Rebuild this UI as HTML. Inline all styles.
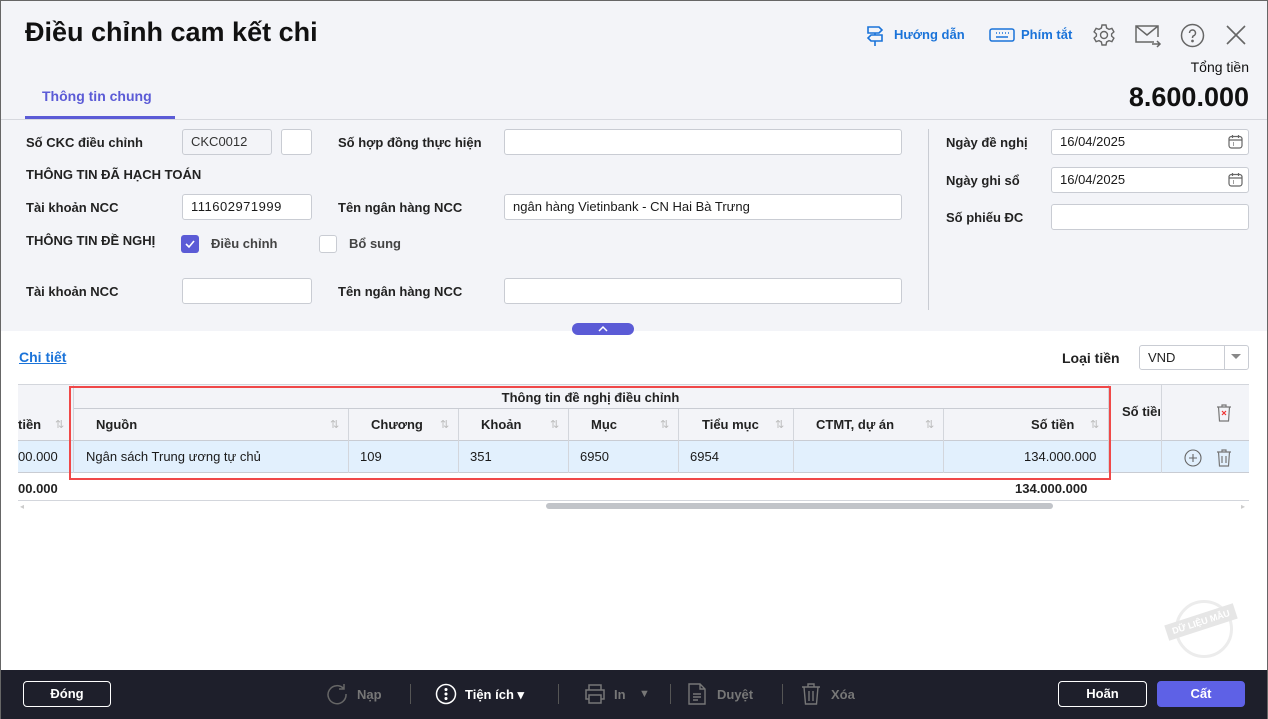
<!DOCTYPE html>
<html><head><meta charset="utf-8">
<style>
*{box-sizing:border-box;margin:0;padding:0}
body{width:1268px;height:719px;overflow:hidden;font-family:"Liberation Sans",sans-serif;font-size:13px;color:#1a1a1a;background:#fff;position:relative}
.a{position:absolute}
.top{left:0;top:0;width:1268px;height:331px;background:#f3f4f8;border-left:1px solid #666;border-right:1px solid #666;border-top:1px solid #666}
.lbl{font-weight:bold;font-size:13px;color:#222}
.inp{position:absolute;background:#fff;border:1px solid #c9ccd3;border-radius:3px;height:26px;padding:0 8px;line-height:24px;font-size:13px}
.sort{color:#bbb;font-size:11px;position:absolute;top:0}
.vl{position:absolute;width:1px;background:#d3d6dc}
.foot{left:0;top:670px;width:1268px;height:49px;background:#1e1f2b}
.fbtn{position:absolute;top:12px;height:26px;border:1px solid #fff;border-radius:4px;color:#fff;font-weight:bold;text-align:center;line-height:24px}
.ft{position:absolute;top:0;line-height:49px;font-weight:bold;font-size:13px}
</style></head><body>
<div class="a top"></div>
<div class="a" style="left:0;top:0;width:1268px;height:719px;border-left:1px solid #666;border-right:1px solid #666;pointer-events:none;z-index:5"></div>
<div class="a" style="left:25px;top:17px;font-size:27px;font-weight:bold;color:#111">Điều chỉnh cam kết chi</div>
<svg class="a" style="left:865px;top:25px" width="20" height="22" viewBox="0 0 20 22" fill="none" stroke="#1a73d9" stroke-width="1.6"><path d="M3 2h11l3 3-3 3H3zM17 10H6l-3 3 3 3h11zM10 8v2M10 16v5"/></svg>
<div class="a" style="left:894px;top:27px;color:#1a73d9;font-weight:bold;font-size:13px">Hướng dẫn</div>
<svg class="a" style="left:989px;top:28px" width="26" height="14" viewBox="0 0 26 14" fill="none" stroke="#1a73d9" stroke-width="1.5"><rect x="1" y="1" width="24" height="12" rx="2"/><path d="M7 5h1M10 5h1M13 5h1M16 5h1M19 5h1M7 9h12"/></svg>
<div class="a" style="left:1021px;top:27px;color:#1a73d9;font-weight:bold;font-size:13px">Phím tắt</div>
<svg class="a" style="left:1092px;top:23px" width="24" height="24" viewBox="0 0 24 24" fill="none" stroke="#666" stroke-width="1.4"><circle cx="12" cy="12" r="3.5"/><path d="M10 2h4l.6 3 2.4 1.4 2.9-1 2 3.5-2.3 2v2.2l2.3 2-2 3.5-2.9-1L14.6 19 14 22h-4l-.6-3L7 17.6l-2.9 1-2-3.5 2.3-2v-2.2l-2.3-2 2-3.5 2.9 1L9.4 5z"/></svg>
<svg class="a" style="left:1135px;top:24px" width="27" height="24" viewBox="0 0 27 24" fill="none" stroke="#666" stroke-width="1.5"><path d="M19 18H1V2h22v11M1 2l11 9 11-9M17 20h8M22 17l3 3-3 3"/></svg>
<svg class="a" style="left:1180px;top:23px" width="25" height="25" viewBox="0 0 25 25" fill="none" stroke="#666" stroke-width="1.5"><circle cx="12.5" cy="12.5" r="11"/><path d="M9.5 10a3 3 0 1 1 4 2.8c-1 .4-1 1.2-1 2.2"/><circle cx="12.5" cy="18" r=".6" fill="#666"/></svg>
<svg class="a" style="left:1226px;top:25px" width="20" height="20" viewBox="0 0 20 20" stroke="#666" stroke-width="1.6"><path d="M1 1l18 18M19 1L1 19"/></svg>
<div class="a" style="right:19px;top:59px;font-size:14px;color:#111">Tổng tiền</div>
<div class="a" style="right:19px;top:82px;font-size:27px;font-weight:bold;color:#111">8.600.000</div>
<div class="a" style="left:42px;top:88px;color:#5b5bd6;font-weight:bold;font-size:14px">Thông tin chung</div>
<div class="a" style="left:25px;top:116px;width:150px;height:3px;background:#5b5bd6"></div>
<div class="a" style="left:1px;top:119px;width:1266px;height:1px;background:#d6d8de"></div>
<div class="a lbl" style="left:26px;top:135px">Số CKC điều chỉnh</div>
<div class="inp" style="left:182px;top:129px;width:90px;background:#f3f4f8;color:#333">CKC0012</div>
<div class="inp" style="left:281px;top:129px;width:31px"></div>
<div class="a lbl" style="left:338px;top:135px">Số hợp đồng thực hiện</div>
<div class="inp" style="left:504px;top:129px;width:398px"></div>
<div class="a lbl" style="left:26px;top:167px">THÔNG TIN ĐÃ HẠCH TOÁN</div>
<div class="a lbl" style="left:26px;top:200px">Tài khoản NCC</div>
<div class="inp" style="left:182px;top:194px;width:130px;letter-spacing:.5px">111602971999</div>
<div class="a lbl" style="left:338px;top:200px">Tên ngân hàng NCC</div>
<div class="inp" style="left:504px;top:194px;width:398px">ngân hàng Vietinbank - CN Hai Bà Trưng</div>
<div class="a lbl" style="left:26px;top:233px">THÔNG TIN ĐỀ NGHỊ</div>
<div class="a" style="left:181px;top:235px;width:18px;height:18px;background:#5b5bd6;border-radius:3px"><svg width="18" height="18"><path d="M5 9l3 3 5-6" stroke="#fff" stroke-width="1.6" fill="none"/></svg></div>
<div class="a lbl" style="left:211px;top:236px;color:#444">Điều chỉnh</div>
<div class="a" style="left:319px;top:235px;width:18px;height:18px;background:#fff;border:1px solid #c9ccd3;border-radius:3px"></div>
<div class="a lbl" style="left:349px;top:236px;color:#444">Bổ sung</div>
<div class="a lbl" style="left:26px;top:284px">Tài khoản NCC</div>
<div class="inp" style="left:182px;top:278px;width:130px"></div>
<div class="a lbl" style="left:338px;top:284px">Tên ngân hàng NCC</div>
<div class="inp" style="left:504px;top:278px;width:398px"></div>
<div class="a" style="left:928px;top:129px;width:1px;height:181px;background:#c9ccd3"></div>
<div class="a lbl" style="left:946px;top:135px">Ngày đề nghị</div>
<div class="inp" style="left:1051px;top:129px;width:198px">16/04/2025</div>
<div class="a lbl" style="left:946px;top:173px">Ngày ghi sổ</div>
<div class="inp" style="left:1051px;top:167px;width:198px">16/04/2025</div>
<svg class="a" style="left:1228px;top:134px" width="15" height="15" viewBox="0 0 15 15" fill="none" stroke="#666" stroke-width="1.2"><rect x="1" y="2.5" width="13" height="11.5" rx="2.5"/><path d="M1 6h13M4.5 1v3M10.5 1v3M5 9h1M5 11h1"/></svg>
<svg class="a" style="left:1228px;top:172px" width="15" height="15" viewBox="0 0 15 15" fill="none" stroke="#666" stroke-width="1.2"><rect x="1" y="2.5" width="13" height="11.5" rx="2.5"/><path d="M1 6h13M4.5 1v3M10.5 1v3M5 9h1M5 11h1"/></svg>
<div class="a lbl" style="left:946px;top:210px">Số phiếu ĐC</div>
<div class="inp" style="left:1051px;top:204px;width:198px"></div>
<div class="a" style="left:572px;top:323px;width:62px;height:12px;background:#5b5bd6;border-radius:6px"><svg width="62" height="12"><path d="M27 8l4-4 4 4" stroke="#fff" stroke-width="1.5" fill="none"/></svg></div>
<div class="a" style="left:19px;top:349px;color:#1a73d9;font-weight:bold;font-size:14px;text-decoration:underline">Chi tiết</div>
<div class="a lbl" style="left:1062px;top:350px;font-size:14px">Loại tiền</div>
<div class="inp" style="left:1139px;top:345px;width:110px;height:25px;background:#fff;color:#222">VND</div>
<div class="a" style="left:1224px;top:346px;width:1px;height:23px;background:#c9ccd3"></div>
<div class="a" style="left:1231px;top:354px;width:0;height:0;border-left:5px solid transparent;border-right:5px solid transparent;border-top:5px solid #888"></div>
<div class="a" style="left:18px;top:384px;width:1231px;height:56px;background:#f3f4f8;border-top:1px solid #d3d6dc"></div>
<div class="a" style="left:18px;top:440px;width:1231px;height:33px;background:#e2f0fd;border-top:1px solid #c9ccd3;border-bottom:1px solid #c9ccd3"></div>
<div class="a" style="left:73px;top:408px;width:1035px;height:1px;background:#c9ccd3"></div>
<div class="a" style="left:18px;top:500px;width:1231px;height:1px;background:#d3d6dc"></div>
<div class="vl" style="left:73px;top:384px;height:89px"></div>
<div class="vl" style="left:348px;top:409px;height:64px"></div>
<div class="vl" style="left:458px;top:409px;height:64px"></div>
<div class="vl" style="left:568px;top:409px;height:64px"></div>
<div class="vl" style="left:678px;top:409px;height:64px"></div>
<div class="vl" style="left:793px;top:409px;height:64px"></div>
<div class="vl" style="left:943px;top:409px;height:64px"></div>
<div class="vl" style="left:1108px;top:384px;height:89px"></div>
<div class="vl" style="left:1161px;top:384px;height:89px"></div>
<div class="a lbl" style="left:73px;top:390px;width:1035px;text-align:center">Thông tin đề nghị điều chỉnh</div>
<div class="a lbl" style="left:18px;top:417px">tiền</div><span class="a sort" style="left:55px;top:418px">⇅</span>
<div class="a lbl" style="left:96px;top:417px">Nguồn</div><span class="a sort" style="left:330px;top:418px">⇅</span>
<div class="a lbl" style="left:371px;top:417px">Chương</div><span class="a sort" style="left:440px;top:418px">⇅</span>
<div class="a lbl" style="left:481px;top:417px">Khoản</div><span class="a sort" style="left:550px;top:418px">⇅</span>
<div class="a lbl" style="left:591px;top:417px">Mục</div><span class="a sort" style="left:660px;top:418px">⇅</span>
<div class="a lbl" style="left:702px;top:417px">Tiểu mục</div><span class="a sort" style="left:775px;top:418px">⇅</span>
<div class="a lbl" style="left:816px;top:417px">CTMT, dự án</div><span class="a sort" style="left:925px;top:418px">⇅</span>
<div class="a lbl" style="left:1031px;top:417px">Số tiền</div><span class="a sort" style="left:1090px;top:418px">⇅</span>
<div class="a lbl" style="left:1122px;top:404px;width:38px;overflow:hidden;white-space:nowrap">Số tiền</div>
<svg class="a" style="left:1215px;top:403px" width="18" height="19" viewBox="0 0 18 19" fill="none" stroke="#777" stroke-width="1.2"><path d="M2 4h14M7 4V2h4v2M3.5 4l1 14h9l1-14"/><path d="M7 8l4 4M11 8l-4 4" stroke="#e33"/></svg>
<div class="a" style="left:18px;top:449px">00.000</div>
<div class="a" style="left:86px;top:449px">Ngân sách Trung ương tự chủ</div>
<div class="a" style="left:360px;top:449px">109</div>
<div class="a" style="left:470px;top:449px">351</div>
<div class="a" style="left:580px;top:449px">6950</div>
<div class="a" style="left:690px;top:449px">6954</div>
<div class="a" style="left:1024px;top:449px">134.000.000</div>
<svg class="a" style="left:1184px;top:449px" width="18" height="18" viewBox="0 0 18 18" fill="none" stroke="#666" stroke-width="1.1"><circle cx="9" cy="9" r="8"/><path d="M9 5v8M5 9h8"/></svg>
<svg class="a" style="left:1215px;top:448px" width="18" height="19" viewBox="0 0 18 19" fill="none" stroke="#777" stroke-width="1.2"><path d="M2 4h14M7 4V2h4v2M3.5 4l1 14h9l1-14M7 8v7M11 8v7"/></svg>
<div class="a lbl" style="left:18px;top:481px">00.000</div>
<div class="a lbl" style="left:1015px;top:481px">134.000.000</div>
<div class="a" style="left:69px;top:386px;width:1042px;height:94px;border:2px solid #f04848"></div>
<div class="a" style="left:546px;top:503px;width:507px;height:6px;background:#c1c4c9;border-radius:3px"></div>
<div class="a" style="left:20px;top:502px;color:#ccc;font-size:8px">◂</div>
<div class="a" style="left:1241px;top:502px;color:#ccc;font-size:8px">▸</div>
<div class="a" style="left:1175px;top:600px;width:58px;height:58px;border:3px solid #ececec;border-radius:50%"></div>
<div class="a" style="left:1165px;top:614px;width:72px;height:16px;background:#e6e6e6;color:#fff;font-size:9px;font-weight:bold;text-align:center;line-height:16px;transform:rotate(-18deg)">DỮ LIỆU MẪU</div>
<div class="a foot"></div>
<div class="fbtn" style="left:23px;top:681px;width:88px">Đóng</div>
<svg class="a" style="left:326px;top:683px" width="22" height="22" viewBox="0 0 22 22" fill="none" stroke="#666" stroke-width="1.5"><path d="M18 6A9 9 0 1 0 20 11M18 1v5h-5"/></svg>
<div class="ft" style="left:357px;top:670px;color:#777">Nạp</div>
<div class="a" style="left:410px;top:684px;width:1px;height:20px;background:#555"></div>
<svg class="a" style="left:435px;top:683px" width="22" height="22" viewBox="0 0 22 22" fill="none" stroke="#fff" stroke-width="1.5"><circle cx="11" cy="11" r="9.5"/><circle cx="11" cy="6.5" r=".8" fill="#fff"/><circle cx="11" cy="11" r=".8" fill="#fff"/><circle cx="11" cy="15.5" r=".8" fill="#fff"/></svg>
<div class="ft" style="left:465px;top:670px;color:#fff">Tiện ích ▾</div>
<div class="a" style="left:558px;top:684px;width:1px;height:20px;background:#555"></div>
<svg class="a" style="left:584px;top:683px" width="22" height="22" viewBox="0 0 22 22" fill="none" stroke="#777" stroke-width="1.5"><path d="M5 7V2h12v5M5 16H2V7h18v9h-3M5 12h12v8H5z"/></svg>
<div class="ft" style="left:614px;top:670px;color:#777">In</div>
<div class="ft" style="left:639px;top:670px;color:#777;font-size:11px">▼</div>
<div class="a" style="left:670px;top:684px;width:1px;height:20px;background:#555"></div>
<svg class="a" style="left:688px;top:683px" width="18" height="22" viewBox="0 0 18 22" fill="none" stroke="#777" stroke-width="1.4"><path d="M1 1h11l5 5v15H1zM12 1v5h5M5 11h8M5 14h8M5 17h5"/></svg>
<div class="ft" style="left:717px;top:670px;color:#777">Duyệt</div>
<div class="a" style="left:782px;top:684px;width:1px;height:20px;background:#555"></div>
<svg class="a" style="left:801px;top:683px" width="20" height="22" viewBox="0 0 20 22" fill="none" stroke="#777" stroke-width="1.4"><path d="M1 4h18M7 4V1h6v3M3 4l1.5 17h11L17 4M8 8v10M12 8v10"/></svg>
<div class="ft" style="left:831px;top:670px;color:#777">Xóa</div>
<div class="fbtn" style="left:1058px;top:681px;width:89px">Hoãn</div>
<div class="fbtn" style="left:1157px;top:681px;width:88px;background:#5e61e6;border-color:#5e61e6">Cất</div>
</body></html>
